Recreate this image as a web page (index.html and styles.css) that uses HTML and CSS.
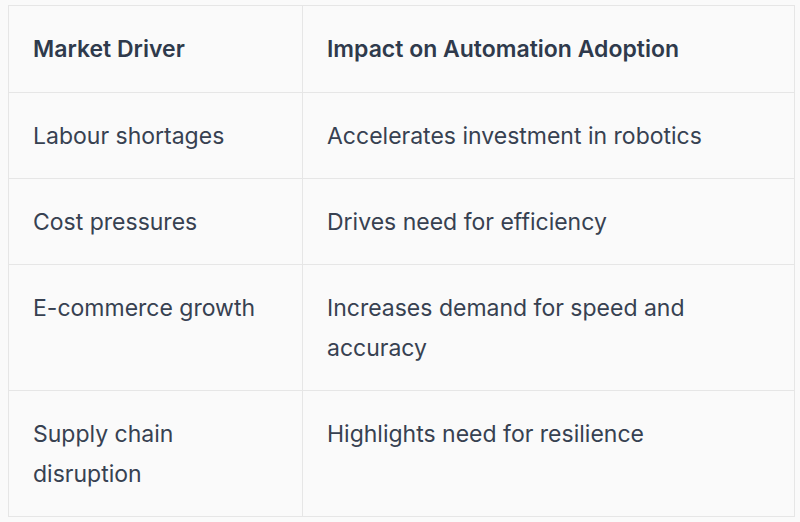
FILE: index.html
```html
<!DOCTYPE html>
<html lang="en">
<head>
<meta charset="utf-8">
<link rel="stylesheet" href="styles.css">
</head>
<body>
<table class="drivers">
  <colgroup>
    <col class="col-driver">
    <col class="col-impact">
  </colgroup>
  <thead>
    <tr><th>Market Driver</th><th>Impact on Automation Adoption</th></tr>
  </thead>
  <tbody>
    <tr><td>Labour shortages</td><td>Accelerates investment in robotics</td></tr>
    <tr><td>Cost pressures</td><td>Drives need for efficiency</td></tr>
    <tr><td>E-commerce growth</td><td>Increases demand for speed and accuracy</td></tr>
    <tr><td>Supply chain disruption</td><td>Highlights need for resilience</td></tr>
  </tbody>
</table>
</body>
</html>
```

FILE: styles.css
```css
html, body {
  margin: 0;
  background: #fafafa;
}
body {
  padding: 5px 5px 0 8px;
  font-family: Inter, "Noto Sans", sans-serif;
  color: #374151;
}
.drivers {
  width: 787px;
  border-collapse: collapse;
  table-layout: fixed;
  font-size: 23px;
  line-height: 40px;
}
.col-driver { width: 294px; }
.drivers th, .drivers td {
  border: 1px solid #e6e6e6;
  padding: 22.5px 24px;
  text-align: left;
  vertical-align: top;
}
.drivers th {
  font-weight: 600;
  color: #2f3a4c;
  padding-top: 23px;
  padding-bottom: 23px;
}
```
